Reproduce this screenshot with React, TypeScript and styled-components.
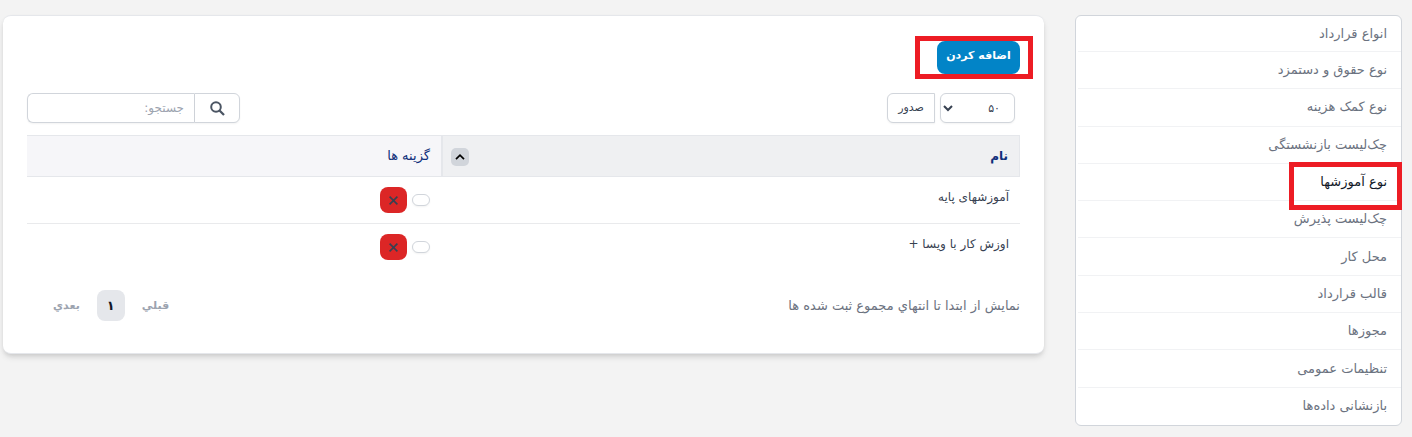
import React from "react";
import styled, { createGlobalStyle, css } from "styled-components";

const GlobalStyle = createGlobalStyle`
  *, *::before, *::after { box-sizing: border-box; }
  body {
    margin: 0;
    background: #f3f3f3;
    color: #374151;
    font-family: "DejaVu Sans", "Noto Sans", sans-serif;
    font-size: 12px;
    line-height: 20px;
  }
  button, input, select { font: inherit; color: inherit; margin: 0; }
  button { cursor: pointer; }
`;

const Page = styled.div`
  display: flex;
  align-items: flex-start;
  gap: 31px;
  padding: 15px 10px 11px 3px;
`;

const Sidebar = styled.nav`
  position: relative;
  flex: 0 0 327px;
  font-size: 13px;
`;

const MenuList = styled.ul`
  display: flex;
  flex-direction: column;
  min-height: 411px;
  margin: 0;
  padding: 0;
  list-style: none;
  background: #fff;
  border: 1px solid #d1d5db;
  border-radius: 6px;
`;

const MenuItem = styled.li`
  position: relative;
  display: flex;
  flex: 1 0 36px;
  margin-left: 2px;
  border-bottom: 1px solid #f1f2f4;

  &:first-child { flex-grow: 0; }
  &:last-child { border-bottom: 0; }
`;

const MenuLink = styled.a<{ $active?: boolean }>`
  display: flex;
  flex: 1;
  align-items: center;
  padding: 0 14px;
  color: ${(p) => (p.$active ? "#111827" : "#6b7280")};
  text-decoration: none;
`;

const marker = css`
  content: "";
  position: absolute;
  border: 5px solid #ed1c24;
  pointer-events: none;
`;

const MarkedItem = styled(MenuItem)`
  z-index: 1;
  &::after {
    ${marker}
    top: -2px;
    right: -1px;
    width: 113px;
    height: 48px;
  }
`;

const Card = styled.main`
  flex: 1;
  min-width: 0;
  padding: 25px 24px 32px;
  background: #fff;
  border: 1px solid #e5e7eb;
  border-width: 1px 0;
  border-radius: 8px;
  box-shadow: 0 4px 6px -1px rgba(0, 0, 0, 0.12), 0 2px 4px -1px rgba(0, 0, 0, 0.08);
`;

const Actions = styled.div`
  display: flex;
`;

const MarkedAction = styled.div`
  position: relative;
  &::after {
    ${marker}
    top: -5px;
    right: -13px;
    width: 118px;
    height: 43px;
  }
`;

const AddButton = styled.button`
  display: block;
  height: 33px;
  width: 83px;
  padding: 0 0 3px;
  border: 0;
  border-radius: 8px;
  background: #0284c7;
  color: #fff;
  font-size: 11px;
  font-weight: 700;
  white-space: nowrap;
`;

const Toolbar = styled.div`
  display: flex;
  justify-content: space-between;
  margin: 19px 0 12px;
`;

const ToolGroup = styled.div`
  display: flex;
  gap: 5px;
  padding-right: 5px;
`;

const control = css`
  height: 30px;
  border: 1px solid #d1d5db;
  background-color: #fff;
  box-shadow: 0 1px 2px rgba(0, 0, 0, 0.05);
`;

const LengthSelect = styled.select`
  ${control}
  width: 75px;
  padding: 0 10px 0 0;
  border-radius: 6px;
  font-size: 11px;
`;

const ExportButton = styled.button`
  ${control}
  width: 48px;
  padding: 0;
  border-radius: 6px 0 0 6px;
  font-size: 11px;
`;

const Search = styled.form`
  display: flex;
`;

const SearchButton = styled.button`
  ${control}
  display: flex;
  align-items: center;
  justify-content: center;
  width: 46px;
  padding: 0;
  border-radius: 0 6px 6px 0;
`;

const SearchInput = styled.input`
  ${control}
  width: 167px;
  padding: 0 10px;
  border-right: 0;
  border-radius: 6px 0 0 6px;
  outline: 0;
  &::placeholder { color: #9ca3af; opacity: 1; }
`;

const Table = styled.table`
  width: 100%;
  table-layout: fixed;
  border-collapse: separate;
  border-spacing: 0;
`;

const HeadCell = styled.th<{ $sorted?: boolean }>`
  width: ${(p) => (p.$sorted ? "auto" : "414px")};
  height: 42px;
  padding: 0 11px;
  text-align: right;
  color: #0f2f7a;
  font-size: ${(p) => (p.$sorted ? "12px" : "13px")};
  font-weight: ${(p) => (p.$sorted ? 700 : 400)};
  background: ${(p) => (p.$sorted ? "#eff0f2" : "#f6f6f9")};
  border: solid #e5e7eb;
  border-width: ${(p) => (p.$sorted ? "1px 1px 1px 2px" : "1px 0")};
`;

const HeadContent = styled.div`
  display: flex;
  align-items: center;
  justify-content: space-between;
`;

const SortButton = styled.button`
  display: flex;
  align-items: center;
  justify-content: center;
  width: 18px;
  height: 18px;
  margin: 2px 0 0 -3px;
  padding: 0;
  border: 0;
  border-radius: 5px;
  background: #d1d5db;
  color: #000;
`;

const Cell = styled.td`
  height: 47px;
  padding: 10px 11px 9px;
  vertical-align: top;
  border-bottom: 1px solid #e9eaec;
  tr:last-child > & { border-bottom: 0; }
`;

const RowActions = styled.div`
  display: flex;
  align-items: center;
  gap: 5px;
`;

const EditButton = styled.button`
  width: 18px;
  height: 12px;
  padding: 0;
  border: 1px solid #d1d5db;
  border-radius: 6px;
  background: #fff;
  box-shadow: 0 1px 2px rgba(0, 0, 0, 0.05);
`;

const DeleteButton = styled.button`
  display: flex;
  align-items: center;
  justify-content: center;
  width: 27px;
  height: 26px;
  padding: 0;
  border: 0;
  border-radius: 8px;
  background: #dc2626;
  color: #374151;
`;

const Footer = styled.footer`
  display: flex;
  align-items: center;
  justify-content: space-between;
  margin-top: 19px;
  color: #6b7280;
  font-size: 13px;
`;

const Pager = styled.div`
  display: flex;
  align-items: center;
  gap: 17px;
  padding-left: 26px;
`;

const PageButton = styled.button<{ $current?: boolean }>`
  min-width: ${(p) => (p.$current ? "28px" : "0")};
  height: 31px;
  padding: 0;
  border: 0;
  border-radius: 8px;
  background: ${(p) => (p.$current ? "#e5e7eb" : "transparent")};
  color: ${(p) => (p.$current ? "#111827" : "#9ca3af")};
  font-size: ${(p) => (p.$current ? "13px" : "11px")};
  font-weight: 700;
`;

const menu = [
  "انواع قرارداد",
  "نوع حقوق و دستمزد",
  "نوع کمک هزینه",
  "چک‌لیست بازنشستگی",
  "نوع آموزشها",
  "چک‌لیست پذیرش",
  "محل کار",
  "قالب قرارداد",
  "مجوزها",
  "تنظیمات عمومی",
  "بازنشانی داده‌ها",
];
const activeItem = "نوع آموزشها";
const trainings = ["آموزشهای پایه", "اوزش کار با ویسا +"];

const SearchIcon = () => (
  <svg width="15" height="15" viewBox="0 0 15 15" fill="none" stroke="#4b5563" strokeWidth="2">
    <circle cx="6" cy="6" r="4.8" />
    <path d="M9.5 9.5 14 14" strokeWidth="2.3" />
  </svg>
);

const ChevronUp = () => (
  <svg width="10" height="8" viewBox="0 0 10 8" fill="none" stroke="currentColor" strokeWidth="1.7">
    <path d="M1 6.2 5 2.2l4 4" />
  </svg>
);

const CrossIcon = () => (
  <svg width="9" height="9" viewBox="0 0 9 9" fill="none" stroke="currentColor" strokeWidth="1.6">
    <path d="M.6.6l7.8 7.8M8.4.6.6 8.4" />
  </svg>
);

export default function App() {
  return (
    <>
      <GlobalStyle />
      <Page dir="rtl" lang="fa">
        <Sidebar>
          <MenuList>
            {menu.map((label) => {
              const active = label === activeItem;
              const Item = active ? MarkedItem : MenuItem;
              return (
                <Item key={label}>
                  <MenuLink href="#" $active={active} aria-current={active ? "page" : undefined}>
                    {label}
                  </MenuLink>
                </Item>
              );
            })}
          </MenuList>
        </Sidebar>

        <Card>
          <Actions>
            <MarkedAction>
              <AddButton type="button">اضافه کردن</AddButton>
            </MarkedAction>
          </Actions>

          <Toolbar>
            <ToolGroup>
              <LengthSelect aria-label="تعداد" defaultValue="50">
                <option value="50">۵۰</option>
              </LengthSelect>
              <ExportButton type="button">صدور</ExportButton>
            </ToolGroup>
            <Search onSubmit={(e: React.FormEvent) => e.preventDefault()}>
              <SearchButton type="submit" aria-label="جستجو">
                <SearchIcon />
              </SearchButton>
              <SearchInput type="text" placeholder="جستجو:" aria-label="جستجو" />
            </Search>
          </Toolbar>

          <Table>
            <thead>
              <tr>
                <HeadCell $sorted scope="col" aria-sort="ascending">
                  <HeadContent>
                    نام
                    <SortButton type="button" aria-label="مرتب سازی">
                      <ChevronUp />
                    </SortButton>
                  </HeadContent>
                </HeadCell>
                <HeadCell scope="col">گزینه ها</HeadCell>
              </tr>
            </thead>
            <tbody>
              {trainings.map((name) => (
                <tr key={name}>
                  <Cell>{name}</Cell>
                  <Cell>
                    <RowActions>
                      <EditButton type="button" aria-label="ویرایش" />
                      <DeleteButton type="button" aria-label="حذف">
                        <CrossIcon />
                      </DeleteButton>
                    </RowActions>
                  </Cell>
                </tr>
              ))}
            </tbody>
          </Table>

          <Footer>
            <span>نمایش از ابتدا تا انتهاي مجموع ثبت شده ها</span>
            <Pager>
              <PageButton type="button">قبلي</PageButton>
              <PageButton type="button" $current>
                ۱
              </PageButton>
              <PageButton type="button">بعدي</PageButton>
            </Pager>
          </Footer>
        </Card>
      </Page>
    </>
  );
}
